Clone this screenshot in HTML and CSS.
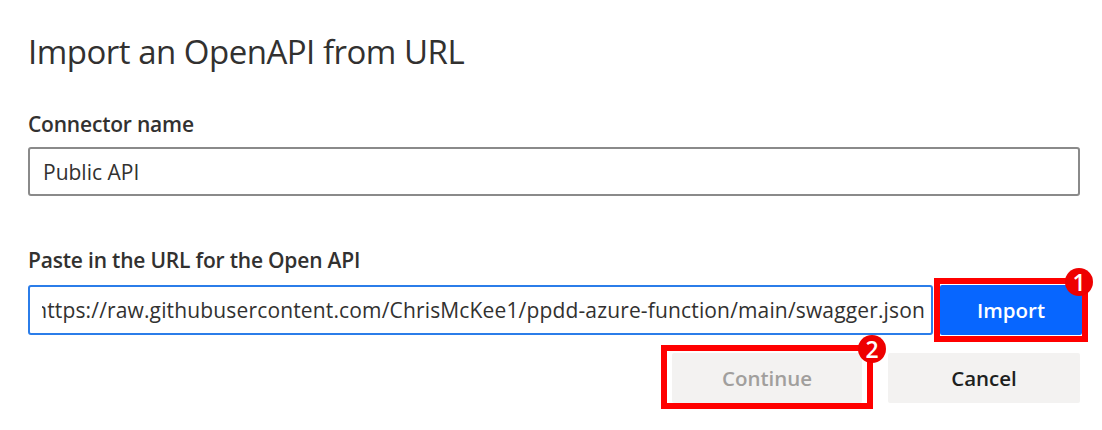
FILE: index.html
```html
<!DOCTYPE html>
<html>
<head>
<meta charset="utf-8">
<link rel="stylesheet" href="styles.css">
</head>
<body>
<div class="panel">
  <h1 class="title">Import an OpenAPI from URL</h1>
  <div class="field">
    <div class="label">Connector name</div>
    <div class="input input-name">Public API</div>
  </div>
  <div class="field field-url">
    <div class="label">Paste in the URL for the Open API</div>
    <div class="url-row">
      <div class="input input-url">
        <div class="url-clip"><span class="url-text">https://raw.githubusercontent.com/ChrisMcKee1/ppdd-azure-function/main/swagger.json</span></div>
      </div>
      <div class="btn-wrap">
        <button class="btn btn-primary">Import</button>
        <div class="mark mark-import"><span class="badge">1</span></div>
      </div>
    </div>
  </div>
  <div class="actions">
    <div class="btn-wrap">
      <button class="btn btn-disabled">Continue</button>
      <div class="mark mark-continue"><span class="badge">2</span></div>
    </div>
    <button class="btn btn-default">Cancel</button>
  </div>
</div>
</body>
</html>
```

FILE: styles.css
```css
html, body {
  margin: 0;
  padding: 0;
  background: #ffffff;
}
body {
  font-family: "Open Sans", "Noto Sans", sans-serif;
  color: #323130;
  min-height: 430px;
}
.panel {
  width: 1052px;
  padding: 30px 0 40px 28px;
  display: flex;
  flex-direction: column;
}
.title {
  margin: 0;
  font-size: 33px;
  font-weight: 400;
  line-height: 44px;
  letter-spacing: -0.5px;
  color: #323130;
}
.field {
  margin-top: 36px;
  display: flex;
  flex-direction: column;
}
.field-url {
  margin-top: 50px;
}
.label {
  font-size: 21px;
  font-weight: 600;
  line-height: 28px;
  margin-bottom: 9px;
  letter-spacing: -0.2px;
}
.field-url .label {
  margin-bottom: 11px;
}
.input {
  box-sizing: border-box;
  height: 49px;
  border: 2px solid #8a8a8a;
  border-radius: 3px;
  display: flex;
  align-items: center;
  padding: 0 13px;
  font-size: 21px;
  color: #323130;
  background: #fff;
}
.url-row {
  display: flex;
  align-items: center;
  margin-right: -2px;
}
.input-url {
  flex: 1;
  min-width: 0;
  height: 50px;
  border-color: #2b7de9;
  padding: 0 6px 0 12px;
  margin-right: 7px;
}
.url-clip {
  flex: 1;
  min-width: 0;
  display: flex;
  justify-content: flex-end;
  overflow: hidden;
  white-space: nowrap;
}
.url-text {
  flex: none;
  letter-spacing: 0.15px;
}
.btn-wrap {
  position: relative;
  display: flex;
  flex: none;
}
.btn {
  box-sizing: border-box;
  height: 50px;
  border: none;
  border-radius: 2px;
  font-family: "Open Sans", "Noto Sans", sans-serif;
  font-size: 20.5px;
  font-weight: 600;
  padding: 0;
  cursor: pointer;
}
.btn-primary {
  width: 142px;
  background: #0766ff;
  color: #ffffff;
}
.btn-disabled {
  width: 190px;
  background: #f3f2f1;
  color: #a19f9d;
}
.btn-default {
  width: 192px;
  background: #f3f2f1;
  color: #201f1e;
}
.actions {
  display: flex;
  justify-content: flex-end;
  gap: 26px;
  margin-top: 18px;
}
.mark {
  position: absolute;
  border: 6px solid #ff0000;
  pointer-events: none;
}
.mark-import {
  left: -6px;
  right: -6px;
  top: -7px;
  bottom: -7px;
}
.mark-continue {
  left: -11px;
  right: -11px;
  top: -8px;
  bottom: -6px;
}
.badge {
  position: absolute;
  width: 28px;
  height: 28px;
  border-radius: 50%;
  background: #ee0000;
  color: #ffffff;
  font-family: "Open Sans", sans-serif;
  font-size: 23px;
  font-weight: 600;
  line-height: 28px;
  text-align: center;
}
.mark-import .badge {
  right: -11px;
  top: -16px;
}
.mark-continue .badge {
  right: -19px;
  top: -16px;
}
```
